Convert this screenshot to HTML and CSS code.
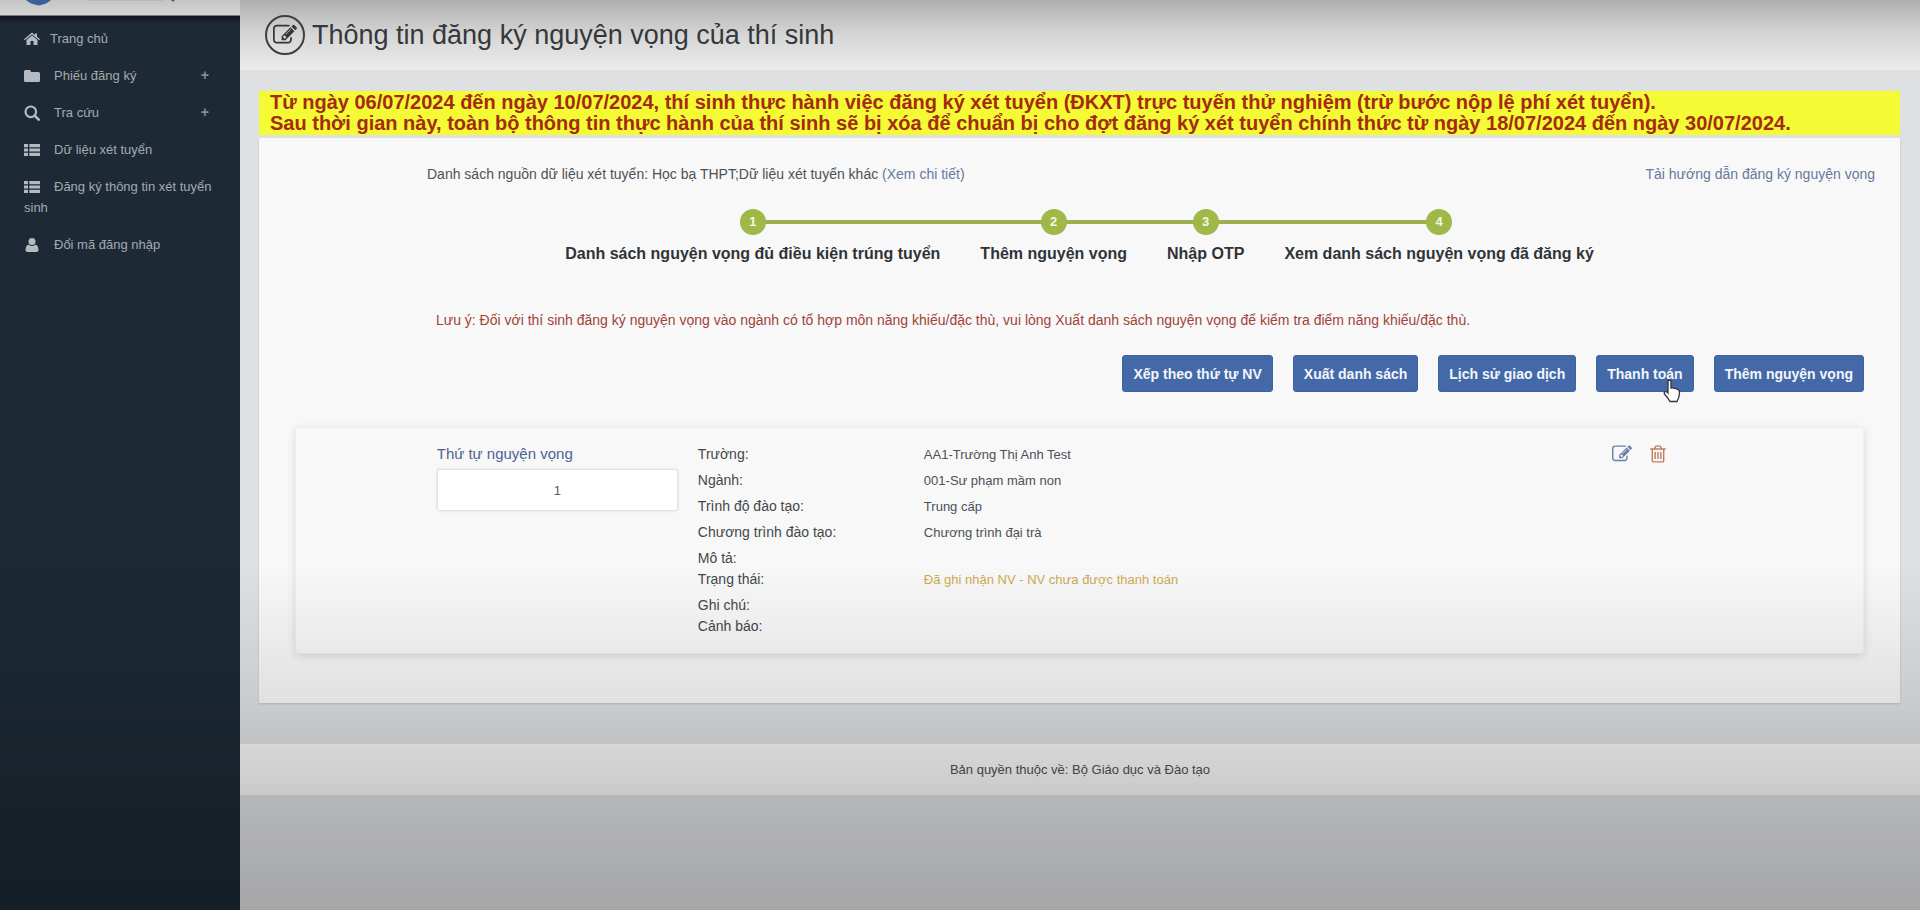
FILE: index.html
```html
<!DOCTYPE html>
<html lang="vi">
<head>
<meta charset="utf-8">
<title>Thông tin đăng ký nguyện vọng của thí sinh</title>
<link rel="stylesheet" href="styles.css">
</head>
<body>
<svg class="defs" aria-hidden="true">
  <symbol id="i-edit" viewBox="0 0 1792 1792"><path d="M888 1184l116-116-152-152-116 116v56h96v96h56zm440-720q-16-16-33 1l-350 350q-17 17-1 33t33-1l350-350q17-17 1-33zm80 594v190q0 119-84.500 203.500t-203.500 84.500h-832q-119 0-203.500-84.500t-84.500-203.500v-832q0-119 84.500-203.500t203.500-84.500h832q63 0 117 25 15 7 18 23 3 17-9 29l-49 49q-14 14-32 8-23-6-45-6h-832q-66 0-113 47t-47 113v832q0 66 47 113t113 47h832q66 0 113-47t47-113v-126q0-13 9-22l64-64q15-15 35-7t20 29zm-96-738l288 288-672 672h-288v-288zm444 132l-92 92-288-288 92-92q28-28 68-28t68 28l152 152q28 28 28 68t-28 68z"/></symbol>
  <symbol id="i-trash" viewBox="0 0 1792 1792"><path d="M704 736v576q0 14-9 23t-23 9h-64q-14 0-23-9t-9-23v-576q0-14 9-23t23-9h64q14 0 23 9t9 23zm256 0v576q0 14-9 23t-23 9h-64q-14 0-23-9t-9-23v-576q0-14 9-23t23-9h64q14 0 23 9t9 23zm256 0v576q0 14-9 23t-23 9h-64q-14 0-23-9t-9-23v-576q0-14 9-23t23-9h64q14 0 23 9t9 23zm128 724v-948h-896v948q0 22 7 40.500t14.500 27 10.500 8.500h832q3 0 10.500-8.500t14.500-27 7-40.500zm-672-1076h448l-48-117q-7-9-17-11h-317q-10 2-17 11zm928 32v64q0 14-9 23t-23 9h-96v948q0 83-47 143.500t-113 60.500h-832q-66 0-113-58.500t-47-141.500v-952h-96q-14 0-23-9t-9-23v-64q0-14 9-23t23-9h309l70-167q15-37 54-63t79-26h320q40 0 79 26t54 63l70 167h309q14 0 23 9t9 23z"/></symbol>
  <symbol id="i-home" viewBox="0 0 16 16"><path d="M8 4.500 13.500 9v5H9.500v-4h-3v4H2.500V9z"/><path d="M8 1.500 11 4V2.500h2v3.200L16 8.200l-.9 1L8 3.400.9 9.200 0 8.200z"/></symbol>
  <symbol id="i-folder" viewBox="0 0 16 16"><path d="M0 3.500Q0 2 1.500 2h4Q7 2 7 3.500V4h7.500Q16 4 16 5.500v7q0 1.500-1.500 1.500h-13Q0 14 0 12.500z"/></symbol>
  <symbol id="i-search" viewBox="0 0 16 16"><circle cx="6.800" cy="6.800" r="5.300" fill="none" stroke="currentColor" stroke-width="2.200"/><path d="m10.700 10.700 4 4" stroke="currentColor" stroke-width="2.600" stroke-linecap="round"/></symbol>
  <symbol id="i-list" viewBox="0 0 16 16"><path d="M0 2h4v3.200H0zM5.300 2H16v3.200H5.300zM0 6.400h4v3.200H0zM5.300 6.400H16v3.200H5.300zM0 10.800h4V14H0zM5.300 10.800H16V14H5.300z"/></symbol>
  <symbol id="i-user" viewBox="0 0 16 16"><circle cx="8" cy="4.500" r="3.500"/><path d="M4.500 7.500Q8 10.500 11.500 7.500 14.500 8.500 14.500 13 14.500 15 12.500 15h-9Q1.500 15 1.500 13 1.500 8.500 4.500 7.500z"/></symbol>
</svg>
<div class="layout">
  <aside class="side">
    <div class="brand">
      <svg class="brand-logo" viewBox="0 0 150 16" aria-hidden="true"><path d="M0 0h25Q21 4 13 5.500 4 4 0 0z" fill="#3c5f9d"/><path d="M62 0h75" stroke="#a3adbd" stroke-width="1"/><path d="M145 0h4l-2 2z" fill="#3c5f9d"/></svg>
    </div>
    <nav class="menu">
      <a href="#"><svg class="icon"><use href="#i-home"/></svg><span class="home-label">Trang chủ</span></a>
      <a href="#"><svg class="icon"><use href="#i-folder"/></svg><span>Phiếu đăng ký</span><b class="plus">+</b></a>
      <a href="#"><svg class="icon"><use href="#i-search"/></svg><span>Tra cứu</span><b class="plus">+</b></a>
      <a href="#"><svg class="icon"><use href="#i-list"/></svg><span>Dữ liệu xét tuyển</span></a>
      <a href="#"><svg class="icon"><use href="#i-list"/></svg><span>Đăng ký thông tin xét tuyển sinh</span></a>
      <a href="#"><svg class="icon"><use href="#i-user"/></svg><span>Đổi mã đăng nhập</span></a>
    </nav>
  </aside>
  <div class="page">
    <header class="head">
      <span class="head-icon"><svg><use href="#i-edit"/></svg></span>
      <h1>Thông tin đăng ký nguyện vọng của thí sinh</h1>
    </header>
    <main class="content">
      <p class="banner">Từ ngày 06/07/2024 đến ngày 10/07/2024, thí sinh thực hành việc đăng ký xét tuyển (ĐKXT) trực tuyến thử nghiệm (trừ bước nộp lệ phí xét tuyển).<br>Sau thời gian này, toàn bộ thông tin thực hành của thí sinh sẽ bị xóa để chuẩn bị cho đợt đăng ký xét tuyển chính thức từ ngày 18/07/2024 đến ngày 30/07/2024.</p>
      <section class="card">
        <div class="source">
          <p>Danh sách nguồn dữ liệu xét tuyển: Học bạ THPT;Dữ liệu xét tuyển khác <a href="#">(Xem chi tiết)</a></p>
          <a href="#">Tải hướng dẫn đăng ký nguyện vọng</a>
        </div>
        <ol class="steps">
          <li><i>1</i><span>Danh sách nguyện vọng đủ điều kiện trúng tuyển</span></li>
          <li><i>2</i><span>Thêm nguyện vọng</span></li>
          <li><i>3</i><span>Nhập OTP</span></li>
          <li><i>4</i><span>Xem danh sách nguyện vọng đã đăng ký</span></li>
        </ol>
        <div class="body">
          <p class="note">Lưu ý: Đối với thí sinh đăng ký nguyện vọng vào ngành có tổ hợp môn năng khiếu/đặc thù, vui lòng Xuất danh sách nguyện vọng để kiểm tra điểm năng khiếu/đặc thù.</p>
          <div class="actions">
            <button type="button">Xếp theo thứ tự NV</button>
            <button type="button">Xuất danh sách</button>
            <button type="button">Lịch sử giao dịch</button>
            <button type="button">Thanh toán<svg class="cursor" viewBox="0 0 18 24" aria-hidden="true"><path d="M5 12V3q0-2 1.500-2T8 3v6q3-.5 7 1.500 1.500.8 1.500 3 0 5-2.500 9H7Q5 19 1.500 15q-.8-1.500.5-2.200T5 14z" fill="#fff" stroke="#333" stroke-width="1.300"/></svg></button>
            <button type="button">Thêm nguyện vọng</button>
          </div>
          <article class="wish">
            <div class="order">
              <label for="order">Thứ tự nguyện vọng</label>
              <input id="order" type="text" value="1">
            </div>
            <dl class="info">
              <div><dt>Trường:</dt><dd>AA1-Trường Thị Anh Test</dd></div>
              <div><dt>Ngành:</dt><dd>001-Sư phạm mầm non</dd></div>
              <div><dt>Trình độ đào tạo:</dt><dd>Trung cấp</dd></div>
              <div><dt>Chương trình đào tạo:</dt><dd>Chương trình đại trà</dd></div>
              <div><dt>Mô tả:</dt></div>
              <div><dt>Trạng thái:</dt><dd class="pending">Đã ghi nhận NV - NV chưa được thanh toán</dd></div>
              <div><dt>Ghi chú:</dt></div>
              <div><dt>Cảnh báo:</dt></div>
            </dl>
            <div class="tools">
              <button type="button" class="edit" aria-label="Sửa"><svg><use href="#i-edit"/></svg></button>
              <button type="button" class="trash" aria-label="Xóa"><svg><use href="#i-trash"/></svg></button>
            </div>
          </article>
        </div>
      </section>
    </main>
    <footer class="foot">Bản quyền thuộc về: Bộ Giáo dục và Đào tạo</footer>
  </div>
</div>
<div class="shade"></div>
</body>
</html>
```
FILE: styles.css
```css
* { box-sizing: border-box; }
body {
  margin: 0;
  background: #dfe0e2;
  color: #4c5156;
  font: 14px/20px "Liberation Sans", Arial, sans-serif;
}
h1, p, ol, dl, dd { margin: 0; }
a { color: #66789c; text-decoration: none; }
svg { fill: currentColor; }
button { font: inherit; cursor: pointer; }
.defs { display: none; }
.layout { display: grid; grid-template-columns: 240px 1fr; min-height: 100vh; }

.side { background: #1d2a35; display: flex; flex-direction: column; }
.brand { height: 16px; background: linear-gradient(#c4c4c4, #d6d6d6); padding-left: 26px; border-bottom: 1px solid #77797d; }
.brand-logo { display: block; width: 150px; height: 16px; }
.menu { padding-top: 4px; background: linear-gradient(#12161f, transparent 8px); }
.menu a { display: block; position: relative; padding: 8px 20px 8px 24px; color: #a3abb2; font-size: 13px; line-height: 21px; }
.icon { width: 16px; height: 16px; vertical-align: -4px; margin-right: 14px; color: #b4bac0; }
.home-label { margin-left: -4px; }
.plus { position: absolute; right: 31px; top: 8px; font-size: 14px; color: #848d96; }

.page { display: flex; flex-direction: column; min-width: 0; }
.head { display: flex; align-items: center; gap: 7px; height: 70px; padding-left: 25px; background: linear-gradient(#afafaf, #d6d6d6 50%, #ebebeb); }
.head-icon { display: grid; place-items: center; width: 40px; height: 40px; border: 2px solid #3c3e41; border-radius: 50%; color: #333538; }
.head-icon svg { width: 24px; height: 24px; }
h1 { font-size: 27px; line-height: 36px; font-weight: 400; color: #35383b; }
.content { padding: 21px 20px 41px 19px; }
.banner { padding: 1px 11px; background: #f4fa33; color: #a52a12; font-size: 20px; line-height: 21px; font-weight: 700; }
.card { margin-top: 3px; padding-bottom: 49px; background: #f8f8f9; box-shadow: 0 1px 2px rgba(0, 0, 0, .15); }
.source { display: flex; justify-content: space-between; padding: 26px 25px 0 168px; }
.steps { display: flex; justify-content: center; padding: 25px 0 0; list-style: none; }
.steps li { position: relative; display: flex; flex-direction: column; align-items: center; gap: 9px; padding: 0 20px; color: #303336; font-size: 16px; font-weight: 700; }
.steps li::before { content: ""; position: absolute; top: 11px; left: 0; right: 0; height: 4px; background: #9cae50; }
.steps li:first-child::before { left: 50%; }
.steps li:last-child::before { right: 50%; }
.steps i { position: relative; width: 26px; height: 26px; border-radius: 50%; background: #9fb847; color: #f4f8e4; font-size: 13px; line-height: 26px; font-style: normal; text-align: center; }
.body { padding: 46px 36px 0; }
.note { padding-left: 141px; color: #a34238; }
.actions { display: flex; justify-content: flex-end; gap: 20px; padding: 25px 0 35px; }
.actions button { position: relative; height: 37px; padding: 0 10px; border: 1px solid #3c63a2; border-radius: 3px; background: #4469a8; color: #f3f6fa; font-weight: 700; }
.cursor { position: absolute; right: 12px; bottom: -12px; width: 18px; height: 24px; }
.wish { display: grid; grid-template-columns: 2fr 7fr 2fr; padding: 16px 0 16px 8.333%; border: 1px solid #efeff0; border-radius: 3px; background: #f8f8f8; box-shadow: 0 2px 8px rgba(0, 0, 0, .13); }
.order { padding: 0 10px; }
.order label { display: block; color: #4c6393; font-size: 15px; }
.order input { width: 100%; height: 42px; margin-top: 5px; border: 1px solid #e2e2e4; border-radius: 3px; background: #fff; color: #55595d; font: inherit; font-size: 13px; text-align: center; box-shadow: 0 0 3px rgba(0, 0, 0, .12); }
.info div { display: grid; grid-template-columns: 25% 1fr; padding-left: 10px; line-height: 21px; }
.info div:has(dd) { padding-bottom: 5px; }
.info dt { color: #43474a; }
.info dd { font-size: 13px; }
.info .pending { color: #ceaa52; }
.tools { display: flex; align-items: flex-start; gap: 16px; padding-left: 10px; }
.tools button { display: flex; padding: 0; border: 0; background: none; }
.tools svg { width: 20px; height: 20px; }
.edit { color: #687fae; }
.trash { color: #bd7e63; }
.foot { padding: 15px; background: #f8f8f8; border-top: 1px solid #fafafa; color: #4d5052; font-size: 13px; text-align: center; }
.shade { position: fixed; inset: 0; pointer-events: none; background: linear-gradient(transparent 62%, rgba(0, 0, 0, .09) 77%, rgba(0, 0, 0, .18) 87%, rgba(0, 0, 0, .26)); }
```
